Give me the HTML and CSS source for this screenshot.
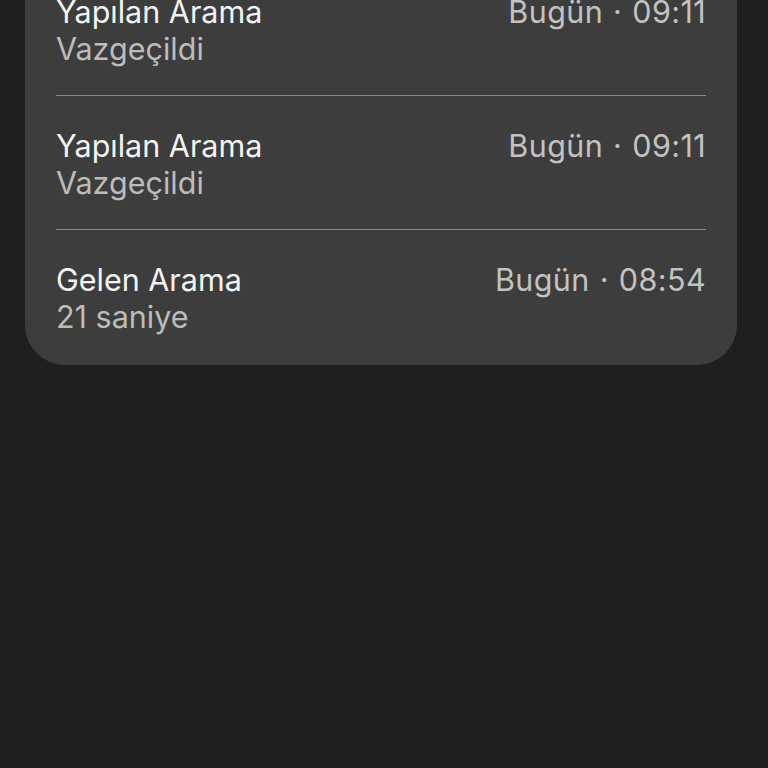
FILE: index.html
```html
<!DOCTYPE html>
<html lang="tr">
<head>
<meta charset="utf-8">
<link rel="stylesheet" href="styles.css">
</head>
<body>
<div class="card">
  <div class="row">
    <div class="col">
      <div class="title">Yapılan Arama</div>
      <div class="sub">Vazgeçildi</div>
    </div>
    <div class="time">Bugün · 09:11</div>
  </div>
  <div class="row">
    <div class="col">
      <div class="title">Yapılan Arama</div>
      <div class="sub">Vazgeçildi</div>
    </div>
    <div class="time">Bugün · 09:11</div>
  </div>
  <div class="row">
    <div class="col">
      <div class="title">Gelen Arama</div>
      <div class="sub">21 saniye</div>
    </div>
    <div class="time">Bugün · 08:54</div>
  </div>
</div>
</body>
</html>
```
FILE: styles.css
```css
html, body {
  margin: 0;
  padding: 0;
  background: #1f1f1f;
  height: 100%;
  overflow: hidden;
}
body {
  font-family: Inter, "Noto Sans", sans-serif;
  font-size: 30.5px;
  line-height: 37px;
}
.card {
  margin: -38px 31px 0 25px;
  background: #3d3d3d;
  border-radius: 0 0 40px 40px;
  padding: 0 31px;
}
.row {
  display: flex;
  justify-content: space-between;
  align-items: flex-start;
  padding: 31px 0 28px;
  border-bottom: 1.5px solid #8c8c8c;
}
.row:last-child {
  border-bottom: none;
  padding-bottom: 30px;
}
.title {
  color: #f4f4f4;
}
.sub {
  color: #bcbcbc;
}
.time {
  color: #c2c2c2;
  letter-spacing: 0.4px;
  word-spacing: 1px;
}
```
